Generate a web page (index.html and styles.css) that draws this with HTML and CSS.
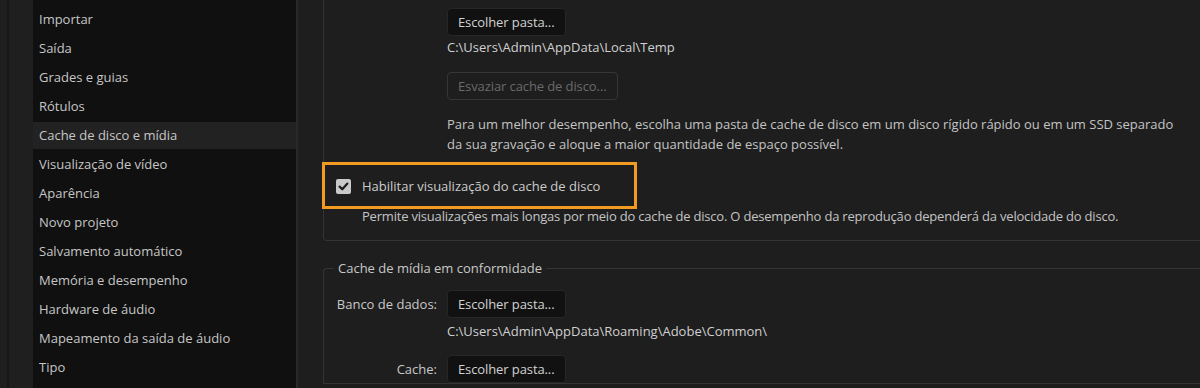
FILE: index.html
```html
<!DOCTYPE html>
<html lang="pt-BR">
<head>
<meta charset="utf-8">
<title>Preferências</title>
<link rel="stylesheet" href="styles.css">
</head>
<body>
<div class="app">
  <div class="gutter"><div class="gutter-line"></div></div>
  <ul class="nav">
    <li>Importar</li>
    <li>Saída</li>
    <li>Grades e guias</li>
    <li>Rótulos</li>
    <li class="selected">Cache de disco e mídia</li>
    <li>Visualização de vídeo</li>
    <li>Aparência</li>
    <li>Novo projeto</li>
    <li>Salvamento automático</li>
    <li>Memória e desempenho</li>
    <li>Hardware de áudio</li>
    <li>Mapeamento da saída de áudio</li>
    <li>Tipo</li>
  </ul>
  <div class="content">
    <div class="group group-top">
      <button class="btn btn-first">Escolher pasta...</button>
      <div class="path">C:\Users\Admin\AppData\Local\Temp</div>
      <button class="btn btn-disabled" disabled>Esvaziar cache de disco...</button>
      <p class="hint">Para um melhor desempenho, escolha uma pasta de cache de disco em um disco rígido rápido ou em um SSD separado<br>da sua gravação e aloque a maior quantidade de espaço possível.</p>
      <div class="check-row">
        <span class="checkbox"><svg viewBox="0 0 15 15" width="15" height="15"><path d="M3.6 7.6 L6.3 10.3 L11.4 4.6" fill="none" stroke="#1c1c1c" stroke-width="2.2" stroke-linecap="round" stroke-linejoin="round"/></svg></span>
        <span class="check-label">Habilitar visualização do cache de disco</span>
        <span class="highlight"></span>
      </div>
      <div class="desc">Permite visualizações mais longas por meio do cache de disco. O desempenho da reprodução dependerá da velocidade do disco.</div>
    </div>
    <fieldset class="group group-media">
      <legend>Cache de mídia em conformidade</legend>
      <div class="form-grid">
        <span class="label">Banco de dados:</span>
        <button class="btn">Escolher pasta...</button>
        <span></span>
        <div class="path path-media">C:\Users\Admin\AppData\Roaming\Adobe\Common\</div>
        <span class="label label-cache">Cache:</span>
        <button class="btn btn-cache">Escolher pasta...</button>
      </div>
    </fieldset>
  </div>
</div>
</body>
</html>
```
FILE: styles.css
```css
html, body {
  margin: 0;
  padding: 0;
  background: #1e1e1e;
  overflow: hidden;
}
body {
  font-family: "Open Sans", "Noto Sans", sans-serif;
  font-size: 13px;
  color: #c8c8c8;
}
.app {
  display: flex;
  height: 388px;
  width: 1200px;
  overflow: hidden;
}
.gutter {
  width: 33px;
  flex: none;
  background: #1f1f1f;
  display: flex;
}
.gutter-line {
  width: 2px;
  margin-left: 7px;
  background: #171717;
}
.nav {
  list-style: none;
  margin: 0;
  padding: 6px 0 0 0;
  width: 263px;
  flex: none;
  background: #101010;
  display: flex;
  flex-direction: column;
  gap: 2px;
  border-right: 2px solid #292929;
}
.nav li {
  height: 27px;
  line-height: 27px;
  padding-left: 6px;
  color: #c6c6c6;
  white-space: nowrap;
}
.nav li.selected {
  background: #222222;
}
.content {
  flex: 1;
  padding-left: 25px;
  min-width: 0;
  overflow: hidden;
}
.group-top {
  position: relative;
  border-left: 1px solid #343434;
  border-bottom: 1px solid #343434;
  border-bottom-left-radius: 4px;
  margin-right: -10px;
  padding: 8px 0 14px 0;
  display: flex;
  flex-direction: column;
  align-items: flex-start;
}
.btn {
  font-family: inherit;
  font-size: 13px;
  color: #d2d2d2;
  background: #111111;
  border: 1px solid #262626;
  border-radius: 4px;
  height: 28px;
  padding: 0 10px;
  line-height: 26px;
  letter-spacing: -0.1px;
}
.btn-first {
  margin-left: 123px;
}
.path {
  margin-left: 123px;
  line-height: 18px;
  margin-top: 2px;
  color: #d0d0d0;
}
.btn-disabled {
  margin-left: 123px;
  margin-top: 16px;
  background: transparent;
  border-color: #363636;
  color: #6a6a6a;
}
.hint {
  margin: 14px 0 0 123px;
  line-height: 20px;
  color: #c4c4c4;
}
.check-row {
  position: relative;
  display: flex;
  align-items: center;
  gap: 11px;
  margin: 22px 0 0 12px;
  height: 20px;
}
.checkbox {
  width: 15px;
  height: 15px;
  background: #c9c9c9;
  border-radius: 2px;
  display: flex;
}
.check-label {
  color: #cccccc;
}
.highlight {
  position: absolute;
  left: -14px;
  top: -14px;
  width: 309px;
  height: 41px;
  border: 3px solid #f39a22;
  pointer-events: none;
}
.desc {
  margin: 10px 0 0 38px;
  line-height: 20px;
  white-space: nowrap;
  letter-spacing: -0.2px;
  color: #c4c4c4;
}
.group-media {
  margin: 18px -10px 0 0;
  padding: 13px 0 0 0;
  border: 1px solid #343434;
  border-right: none;
  border-radius: 4px 0 0 0;
  min-width: 0;
}
.group-media legend {
  margin-left: 10px;
  padding: 0 4px;
  color: #c8c8c8;
  line-height: 18px;
}
.form-grid {
  display: grid;
  grid-template-columns: 113px auto;
  column-gap: 10px;
  justify-content: start;
  align-items: center;
}
.label {
  text-align: right;
  color: #c8c8c8;
}
.form-grid .btn {
  justify-self: start;
}
.path-media {
  margin: 4px 0 0 0;
  line-height: 18px;
}
.label-cache, .btn-cache {
  margin-top: 15px;
}
```
